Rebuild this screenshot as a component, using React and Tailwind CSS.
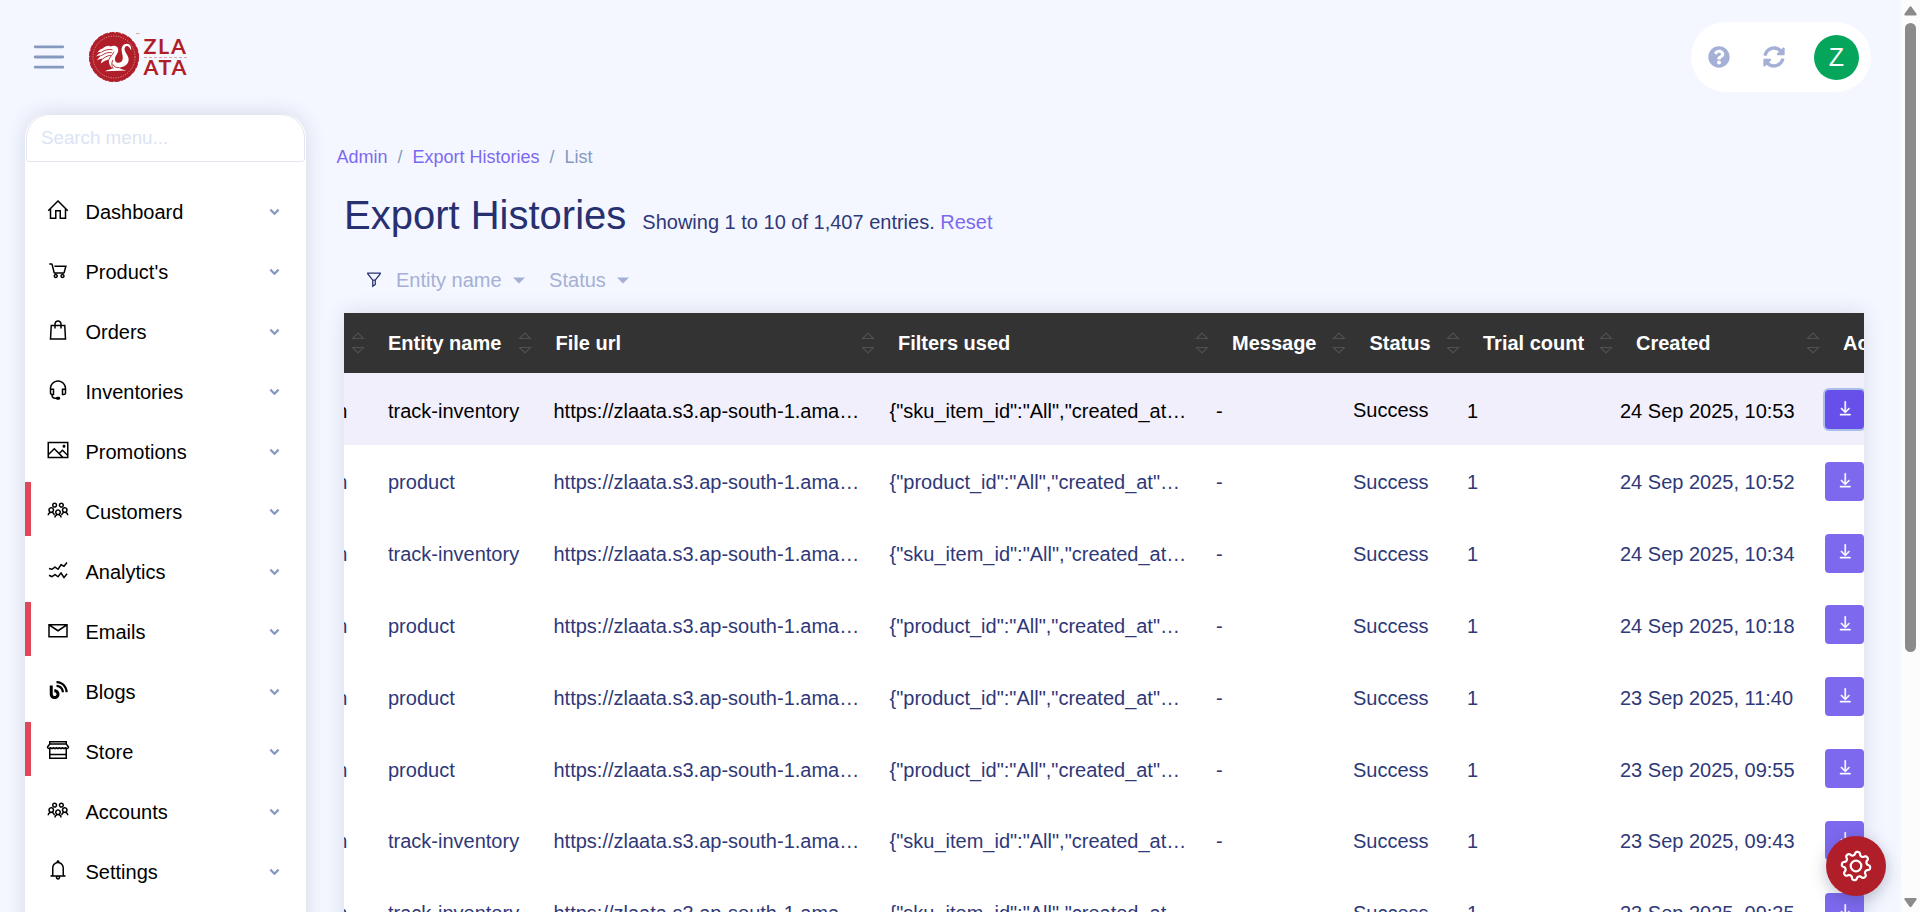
import {
  LiaHomeSolid, LiaShoppingCartSolid, LiaShoppingBagSolid, LiaHeadsetSolid, LiaImage, LiaUsersSolid,
  LiaChartLineSolid, LiaEnvelope, LiaBlogSolid, LiaStoreSolid, LiaBell, LiaFilterSolid, LiaDownloadSolid,
} from "react-icons/lia";
import { FaQuestionCircle, FaSyncAlt } from "react-icons/fa";

const MENU = [
  ["Dashboard", LiaHomeSolid],
  ["Product's", LiaShoppingCartSolid],
  ["Orders", LiaShoppingBagSolid],
  ["Inventories", LiaHeadsetSolid],
  ["Promotions", LiaImage],
  ["Customers", LiaUsersSolid, true],
  ["Analytics", LiaChartLineSolid],
  ["Emails", LiaEnvelope, true],
  ["Blogs", LiaBlogSolid],
  ["Store", LiaStoreSolid, true],
  ["Accounts", LiaUsersSolid],
  ["Settings", LiaBell],
];

const ROWS = [
  ["track-inventory", "24 Sep 2025, 10:53"],
  ["product", "24 Sep 2025, 10:52"],
  ["track-inventory", "24 Sep 2025, 10:34"],
  ["product", "24 Sep 2025, 10:18"],
  ["product", "23 Sep 2025, 11:40"],
  ["product", "23 Sep 2025, 09:55"],
  ["track-inventory", "23 Sep 2025, 09:43"],
  ["track-inventory", "23 Sep 2025, 09:35"],
];

const HEADERS = ["", "Entity name", "File url", "Filters used", "Message", "Status", "Trial count", "Created"];
const URL_TEXT = "https://zlaata.s3.ap-south-1.ama…";

function Logo() {
  return (
    <div className="flex items-center">
      <svg width="52" height="52" viewBox="0 0 52 52">
        <circle cx="26" cy="26" r="24.6" fill="#b01f29" stroke="#b01f29" strokeWidth="1" strokeDasharray="5 1.5" />
        <circle cx="26" cy="26" r="21" fill="none" stroke="#e9b9bf" strokeWidth="0.7" strokeDasharray="1.2 1.3" />
        <path
          d="M17 40.2 L38.5 39.6 C34 38.6 31.5 37.8 30.5 36.6 C35 36.4 40 34 40.6 29.5 C41.2 25 37.2 22.5 36.6 18.8 C36.2 16 38.3 14.4 40.2 15.4 C41.6 16.2 42 17.6 43.2 19.2 C43.5 16 42.2 12.8 38.8 12.8 C35.2 12.8 33.4 15.8 33.6 19.2 C33.8 22.6 35.4 25.6 34.6 28.6 C33.8 31.4 31 32.6 28.6 31.4 C26.4 30.2 26.4 26.8 28.4 24 C30 21.4 31 18.6 29.6 16.4 C28.2 14.6 25 14.4 22.6 15.4 C20.6 14 17 15.2 14.8 17.4 C12.4 17.6 10.6 20 9.4 21.4 C11.4 20.8 12.6 21 13.6 21 C11.4 22 9.4 23.8 8 25.4 C10.4 24.4 12 24.6 13.4 24.6 C11.6 25.8 10 27.8 9 29.4 C11.4 28 13.6 27.8 15.2 27.6 C13.8 29 13 31 12.8 32.6 C15.6 29.8 18.6 29.2 21 28.4 C20.4 32.4 22 35.6 25 37.2 C22.6 38.4 19.6 38.8 17 40.2 Z"
          fill="#fff"
        />
        <path
          d="M13.6 21 C17 18.8 20.6 18 24 18.6 M13.4 24.6 C17 22 20 21.2 23.4 21.6 M15.2 27.6 C18 25.2 20.4 24.6 22.6 24.4 M21 28.4 C22.4 25.6 24.4 23.8 25.8 21.2 M25 37.2 C23.4 34.6 23.6 31.8 24.6 29.4 M30.5 36.6 C28 36.8 26 35.6 25 33.6"
          fill="none" stroke="#b01f29" strokeWidth="0.9" strokeLinecap="round"
        />
        <path d="M48 2.5 H51.5" stroke="#cf9aa2" strokeWidth="1" strokeDasharray="1.5 0.5" />
      </svg>
      <div className="flex flex-col ml-[4px] font-['Lato','Liberation_Sans',sans-serif] font-bold text-[21.5px] leading-[21px] tracking-[1.6px] text-[#b01f29]">
        <span>ZLA</span>
        <span className="h-px -mb-px w-[43px] border-t border-dashed border-[#dba3aa]" />
        <span>ATA</span>
      </div>
    </div>
  );
}

function SortIcon() {
  return (
    <svg width="14" height="24" viewBox="0 0 14 24" fill="none" stroke="#515151" strokeWidth="1.1" className="shrink-0">
      <path d="M1.6 7.5 L7 2 L12.4 7.5 Z" />
      <path d="M1.6 16.5 L7 22 L12.4 16.5 Z" />
    </svg>
  );
}

function gearOutline(cx, cy, inner, outer, teeth, turn) {
  const points = [];
  for (let i = 0; i < 240; i++) {
    const a = (i / 240) * Math.PI * 2;
    const wave = Math.tanh(1.7 * Math.cos(teeth * (a - turn))) / Math.tanh(1.7);
    const r = (inner + outer) / 2 + ((outer - inner) / 2) * wave;
    points.push(`${(cx + r * Math.sin(a)).toFixed(2)} ${(cy - r * Math.cos(a)).toFixed(2)}`);
  }
  return `M${points.join("L")}Z`;
}

function Caret() {
  return (
    <svg width="12" height="7" viewBox="0 0 12 7" fill="#a5b0d4">
      <path d="M0 0.5 H12 L6 6.5 Z" />
    </svg>
  );
}

export default function App() {
  return (
    <div className="relative flex w-[1920px] h-[912px] overflow-hidden bg-[#f4f7ff] font-['Liberation_Sans',Arial,sans-serif] text-[20px] leading-[30px]">
      <div className="flex flex-col w-[1901px] h-full">
        <header className="flex items-center justify-between h-[114px] shrink-0 pl-[33px] pr-[30px]">
          <div className="flex items-center">
            <svg width="32" height="26" viewBox="0 0 32 26" stroke="#8699bf" strokeWidth="2.8" strokeLinecap="round">
              <path d="M2.2 2.8 H29.8 M2.2 13 H29.8 M2.2 23.2 H29.8" />
            </svg>
            <div className="ml-[22.5px]"><Logo /></div>
          </div>
          <div className="flex items-center h-[70px] w-[180px] rounded-[35px] bg-white pl-[17px]">
            <FaQuestionCircle size={22} color="#a5b0d6" />
            <FaSyncAlt size={22} color="#a5b0d6" className="ml-[33px]" />
            <div className="ml-[29px] mt-[1px] flex items-center justify-center size-[45px] rounded-full bg-[#05a65b] text-white text-[25px] leading-[25px]">Z</div>
          </div>
        </header>

        <div className="flex flex-1 min-h-0">
          <aside className="ml-[25px] w-[281px] h-[900px] shrink-0 flex flex-col bg-white rounded-t-[24px] shadow-[0_0_20px_rgba(40,50,90,0.15)]">
            <div className="flex items-center h-[48px] w-[279px] mx-auto pl-[14px] rounded-t-[24px] rounded-b-[3px] border border-[#e2e6ef] text-[18.75px] text-[#dbe4f3]">
              Search menu...
            </div>
            <nav className="flex flex-col gap-[6px] pt-[20px]">
              {MENU.map(([label, Icon, marked]) => (
                <div
                  key={label}
                  className={`flex items-center h-[54px] shrink-0 border-l-[6px] ${marked ? "border-[#e0485a]" : "border-transparent"}`}
                >
                  <Icon size={24} className="ml-[14.5px] mt-[1px] text-black" />
                  <span className="ml-[16px] mt-[5px] text-black">{label}</span>
                  <svg width="11" height="8" viewBox="0 0 11 8" className="ml-auto mr-[26px] mt-[6px]" fill="none" stroke="#8699bf" strokeWidth="2.2">
                    <path d="M1.4 1.6 L5.5 5.7 L9.6 1.6" />
                  </svg>
                </div>
              ))}
            </nav>
          </aside>

          <main className="ml-[30.5px] w-[1528px] flex flex-col">
            <nav className="mt-[29px] shrink-0 flex text-[18px] leading-[28px] text-[#8699bf]">
              <span className="text-[#7c69ef]">Admin</span>
              <span className="mx-[10px]">/</span>
              <span className="text-[#7c69ef]">Export Histories</span>
              <span className="mx-[10px]">/</span>
              <span>List</span>
            </nav>
            <div className="mt-[20px] ml-[7.5px] h-[48px] shrink-0 flex items-baseline text-[#283070]">
              <h1 className="text-[40px] leading-[48px]">Export Histories</h1>
              <p className="ml-[16px] text-[#2f3878]">
                Showing 1 to 10 of 1,407 entries. <span className="text-[#7c69ef]">Reset</span>
              </p>
            </div>
            <div className="mt-[16px] ml-[27.5px] flex shrink-0 items-center h-[50px] text-[#a5b0d4]">
              <LiaFilterSolid size={20} color="#283070" />
              <span className="ml-[12px] mr-[11px]">Entity name</span>
              <Caret />
              <span className="ml-[24.5px] mr-[11.5px]">Status</span>
              <Caret />
            </div>

            <div className="mt-[8px] ml-[7.5px] w-[1520px] h-[620px] shrink-0 bg-white shadow-[0_0_20px_rgba(40,50,90,0.13)]">
              <div className="w-full h-full overflow-hidden">
                <div className="grid grid-cols-[44px_167.5px_342.5px_334px_137.5px_113.5px_153px_207px_100px] items-center h-[60px] bg-[#333333] text-white font-bold whitespace-nowrap">
                  {HEADERS.map((h) => (
                    <div key={h} className="flex items-center justify-between pr-[23.5px]">
                      <span>{h}</span>
                      <SortIcon />
                    </div>
                  ))}
                  <span>Actions</span>
                </div>
                {ROWS.map(([entity, created], i) => (
                  <div
                    key={created}
                    className={`grid grid-cols-[44px_165.5px_336px_326.5px_137px_114px_153px_205px_60px] items-center h-[71.85px] whitespace-nowrap ${i === 0 ? "pt-[1px] bg-[#f2effd] text-black" : "bg-white text-[#2f3878]"}`}
                  >
                    <span className="flex justify-end w-[3.5px] pt-[3px]">admin</span>
                    <span className="pt-[3px]">{entity}</span>
                    <span className="pt-[3px]">{URL_TEXT}</span>
                    <span className="pt-[3px]">
                      {entity === "product" ? '{"product_id":"All","created_at"…' : '{"sku_item_id":"All","created_at…'}
                    </span>
                    <span className="pt-[3px]">-</span>
                    <span className={i === 0 ? "pt-[2px]" : "pt-[3px]"}>Success</span>
                    <span className="pt-[3px]">1</span>
                    <span className="pt-[3px]">{created}</span>
                    <div
                      className={`flex items-center justify-center w-[39px] h-[39px] mt-[1px] rounded-[4px] text-white ${i === 0 ? "bg-[#6750ea] shadow-[0_0_0_2px_#a9bfea]" : "bg-[#7d69ee]"}`}
                    >
                      <LiaDownloadSolid size={18.5} strokeWidth={0.8} className="mb-[3px] ml-[1px]" />
                    </div>
                  </div>
                ))}
              </div>
            </div>
          </main>
        </div>
      </div>

      <div className="w-[19px] h-full bg-[#fcfcfc] flex flex-col items-center">
        <svg width="13" height="11" viewBox="0 0 13 11" fill="#8b8b8b" className="mt-[6px]">
          <path d="M5.4 1 Q6.5 -0.4 7.6 1 L12.6 8 Q13 9.4 11.6 9.6 H1.4 Q0 9.4 0.4 8 Z" />
        </svg>
        <div className="mt-[6px] w-[11px] h-[629px] rounded-full bg-[#8b8b8b]" />
        <svg width="13" height="11" viewBox="0 0 13 11" fill="#8b8b8b" className="mt-auto mb-[4px]">
          <path d="M5.4 9.6 Q6.5 11 7.6 9.6 L12.6 2.6 Q13 1.2 11.6 1 H1.4 Q0 1.2 0.4 2.6 Z" />
        </svg>
      </div>

      <button className="absolute left-[1826px] top-[836px] size-[60px] rounded-full bg-[#b01f29] flex items-center justify-center shadow-[0_4px_16px_rgba(40,50,90,0.3)]">
        <svg width="34" height="34" viewBox="0 0 34 34" fill="none" stroke="#fff" strokeWidth="2.2">
          <path d={gearOutline(17, 17, 10.9, 14.2, 8, 0.13)} strokeLinejoin="round" />
          <circle cx="17" cy="17" r="5.3" />
        </svg>
      </button>
    </div>
  );
}
